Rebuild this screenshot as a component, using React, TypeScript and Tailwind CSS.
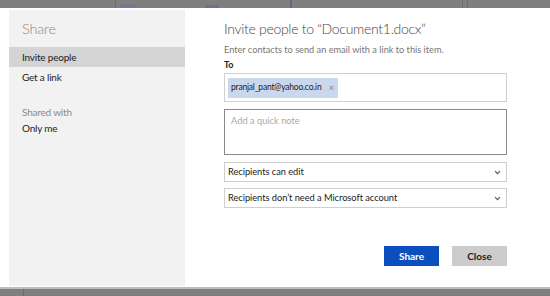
const font = { fontFamily: 'Lato, "Open Sans", sans-serif' };

const Chevron = () => (
  <svg width="7" height="5" viewBox="0 0 7 5" className="text-[#555]">
    <path d="M1 1.2 L3.5 3.7 L6 1.2" fill="none" stroke="currentColor" strokeWidth="1.2" />
  </svg>
);

const Select = ({ label }: { label: string }) => (
  <div className="h-[20px] border border-[#cfcfcf] flex items-center justify-between pl-[3px] pr-[5px] text-[9.3px] tracking-[-0.05px] text-[#222]">
    <span>{label}</span>
    <Chevron />
  </div>
);

export default function App() {
  return (
    <div className="w-[550px] h-[296px] bg-white flex flex-col overflow-hidden" style={font}>
      <div className="h-[8px] bg-[#7f7f7f] flex items-end shrink-0">
        <div className="ml-[115px] w-px h-[8px] bg-[#6f6f6f]" />
        <div className="ml-[4px] w-[15px] h-[4px] bg-[#707a8c]" />
        <div className="ml-[70px] w-[14px] h-[3px] bg-[#6c7486]" />
        <div className="ml-[71px] w-[2px] h-[8px] bg-[#5e6880]" />
        <div className="ml-[170px] w-px h-[8px] bg-[#6f6f6f]" />
        <div className="ml-[4px] w-px h-[8px] bg-[#6f6f6f]" />
      </div>

      <div className="flex-1 flex pt-[2px] pb-[1px]">
        <div className="ml-[9px] w-[176px] bg-[#f2f2f2] flex flex-col">
          <div className="pl-[13px] pt-[9px] text-[14.5px] tracking-[-0.2px] font-light text-[#8a8a8a] leading-[20px]">Share</div>
          <div className="mt-[8px] h-[20px] bg-[#d4d4d4] pl-[13px] flex items-center text-[10px] tracking-[-0.2px] text-[#222]">Invite people</div>
          <div className="h-[20px] pl-[13px] flex items-center text-[10px] tracking-[-0.2px] text-[#222]">Get a link</div>
          <div className="mt-[17px] h-[16px] pl-[13px] flex items-center text-[10px] tracking-[-0.2px] text-[#8a8a8a]">Shared with</div>
          <div className="h-[16px] pl-[13px] flex items-center text-[10px] tracking-[-0.2px] text-[#222]">Only me</div>
        </div>

        <div className="flex-1 pl-[39px] pr-[43px] pt-[9px] flex flex-col">
          <div className="text-[14px] tracking-[-0.3px] font-light text-[#444] leading-[20px]">Invite people to “Document1.docx”</div>
          <div className="mt-[5px] text-[9.2px] text-[#777] leading-[12px]">Enter contacts to send an email with a link to this item.</div>
          <div className="mt-[3px] text-[9px] font-bold text-[#222] leading-[12px]">To</div>
          <div className="mt-[2px] h-[29px] border border-[#cfcfcf] flex items-center pl-[3px]">
            <div className="h-[20px] bg-[#cad8ee] flex items-center pl-[3px] pr-[4px] gap-[7px] text-[8.5px] tracking-[-0.2px] text-[#222]">
              <span>pranjal_pant@yahoo.co.in</span>
              <span className="text-[#888] text-[10px]">×</span>
            </div>
          </div>
          <div className="mt-[7px] h-[46px] border border-[#8a8a8a] pl-[6px] pt-[4px] text-[9.3px] text-[#aaa]">Add a quick note</div>
          <div className="mt-[7px]"><Select label="Recipients can edit" /></div>
          <div className="mt-[6px]"><Select label="Recipients don’t need a Microsoft account" /></div>
          <div className="mt-[38px] flex justify-end gap-[13px]">
            <button className="w-[55px] h-[20px] bg-[#0a4fbd] text-white text-[10px] font-bold">Share</button>
            <button className="w-[55px] h-[20px] bg-[#cccccc] text-[#222] text-[10px] font-bold">Close</button>
          </div>
        </div>
      </div>

      <div className="h-[9px] shrink-0 border-t-2 border-[#bdbdbd] bg-[#7f7f7f] flex">
        <div className="ml-[23px] w-px h-full bg-[#6a6a6a]" />
      </div>
    </div>
  );
}
